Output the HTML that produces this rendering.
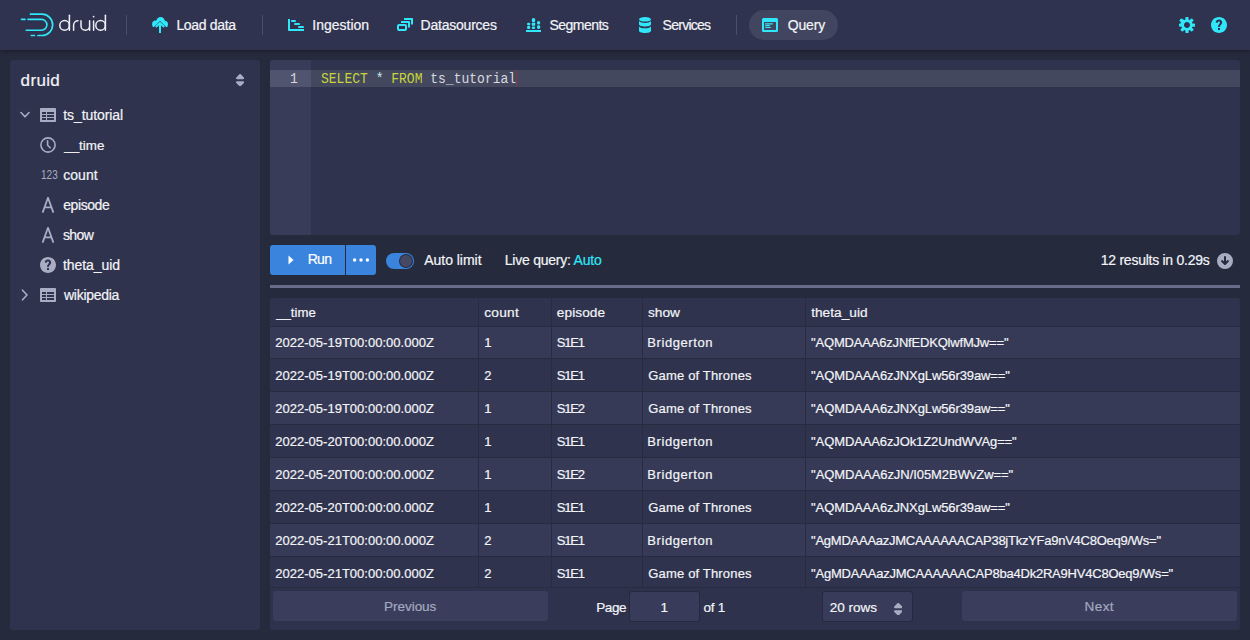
<!DOCTYPE html>
<html><head><meta charset="utf-8">
<style>
*{margin:0;padding:0;box-sizing:border-box}
html,body{width:1250px;height:640px;overflow:hidden;background:#252a3d;font-family:"Liberation Sans",sans-serif;color:#f3f4f7}
.a{position:absolute}
.t{position:absolute;white-space:nowrap;-webkit-text-stroke-width:0.2px}
#hdr{left:0;top:0;width:1250px;height:50px;background:#2f334f;box-shadow:0 1px 4px rgba(0,0,0,.35)}
.sep{position:absolute;top:15px;width:1px;height:20px;background:#4a4e68}
.pill{left:749px;top:10px;width:89px;height:30px;border-radius:15px;background:#41455f}
.panel{background:#2f334e;border-radius:3px}
.cy{fill:#2fe7f8}
.odd{background:#363a56}
.even{background:#2f334e}
.vl{position:absolute;width:1px;background:#282c41}
.btn{position:absolute;background:#3a3e5c;border-radius:3px}

</style></head><body>


<!-- header -->
<div id="hdr" class="a">
  <svg class="a" style="left:0;top:0" width="120" height="50" viewBox="0 0 120 50">
    <g fill="none" stroke="#2fe7f8" stroke-linecap="round">
      <path d="M30.5 14.2 H42 A10.6 10.6 0 0 1 42 35.5 H38" stroke-width="1.7"/>
      <path d="M28 19.4 H41.5 A5.4 5.4 0 0 1 41.5 30.2 H26.2" stroke-width="1.6"/>
      <path d="M21.5 19.4 H25" stroke-width="1.6"/>
      <path d="M31.3 35.5 H34.5" stroke-width="1.6"/>
    </g>
    <g fill="none" stroke="#eef0f5" stroke-width="1.5" stroke-linecap="round">
      <circle cx="64.6" cy="25.4" r="4.8"/>
      <path d="M69.4 15.3 V30.2"/>
      <path d="M73.6 30.2 V25 A4.4 4.4 0 0 1 78 20.7"/>
      <path d="M81 20.7 V26 A4.3 4.3 0 0 0 89.6 26 V20.7 M89.6 25 V30.2"/>
      <path d="M93.6 21 V30.2"/>
      <circle cx="100.6" cy="25.4" r="4.8"/>
      <path d="M105.4 15.3 V30.2"/>
    </g>
    <circle cx="93.6" cy="16.6" r="0.9" fill="#eef0f5"/>
  </svg>
  <div class="sep" style="left:126px"></div>

  <!-- load data icon -->
  <svg class="a" style="left:152px;top:17px" width="16" height="16" viewBox="0 0 16 16">
    <g class="cy"><circle cx="8.6" cy="4.5" r="4.4"/><circle cx="3.7" cy="7.2" r="3.6"/><circle cx="12.5" cy="7.3" r="3.5"/><rect x="3.7" y="5" width="8.8" height="5.8"/></g>
    <path d="M-1 13 L8 4 L17 13 V17 H-1z" fill="#2f334f"/>
    <path d="M3.9 10 L8 5.9 L12.1 10 M8 6.5 V16" fill="none" stroke="#2fe7f8" stroke-width="2" stroke-linejoin="round"/>
  </svg>
  <div class="sep" style="left:262px"></div>

  <!-- ingestion icon -->
  <svg class="a" style="left:288px;top:17px" width="16" height="16" viewBox="0 0 16 16">
    <path class="cy" d="M0 2h2v10h14v2H0.8A0.8 0.8 0 0 1 0 13.2z"/>
    <rect class="cy" x="3" y="3" width="5" height="2" rx="1"/>
    <rect class="cy" x="6" y="6" width="6" height="2" rx="1"/>
    <rect class="cy" x="10" y="9" width="6" height="2" rx="1"/>
  </svg>

  <!-- datasources icon -->
  <svg class="a" style="left:397px;top:17px" width="16" height="16" viewBox="0 0 16 16">
    <g fill="none" stroke="#2fe7f8" stroke-width="2" stroke-linejoin="round">
      <rect x="1" y="8" width="8" height="5" rx="1"/>
      <path d="M4 5 H12 V10.5"/>
      <path d="M7 2 H15 V7.5"/>
    </g>
  </svg>

  <!-- segments icon -->
  <svg class="a" style="left:526px;top:17px" width="16" height="16" viewBox="0 0 16 16">
    <rect class="cy" x="0" y="13" width="15" height="2"/>
    <rect class="cy" x="1" y="5.8" width="3.3" height="2.6" rx="1.3"/>
    <rect class="cy" x="1" y="9" width="3.3" height="3" rx="1.2"/>
    <rect class="cy" x="5.8" y="1" width="3.4" height="4.2" rx="1.5"/>
    <rect class="cy" x="5.8" y="5.8" width="3.4" height="3" rx="0.5"/>
    <rect class="cy" x="5.8" y="9.4" width="3.4" height="2.6" rx="1.2"/>
    <rect class="cy" x="11" y="4" width="3.2" height="3.5" rx="1.5"/>
    <rect class="cy" x="11" y="8.2" width="3.2" height="3.8" rx="1.4"/>
  </svg>

  <!-- services icon -->
  <svg class="a" style="left:639px;top:17px" width="12" height="16" viewBox="0 0 12 16">
    <ellipse class="cy" cx="6" cy="2.3" rx="6" ry="2.3"/>
    <path class="cy" d="M0 4v3.2C0 8.5 2.7 9.5 6 9.5s6-1 6-2.3V4C11 5.2 8.7 5.9 6 5.9S1 5.2 0 4z"/>
    <path class="cy" d="M0 9.4v4.3C0 15 2.7 16 6 16s6-1 6-2.3V9.4C11 10.6 8.7 11.3 6 11.3S1 10.6 0 9.4z"/>
  </svg>
  <div class="sep" style="left:736px"></div>

  <div class="a pill"></div>
  <!-- query icon -->
  <svg class="a" style="left:762px;top:18px" width="16" height="14" viewBox="0 0 16 14">
    <path class="cy" d="M1.5 0h13A1.5 1.5 0 0 1 16 1.5v11a1.5 1.5 0 0 1-1.5 1.5h-13A1.5 1.5 0 0 1 0 12.5v-11A1.5 1.5 0 0 1 1.5 0zM2 4v8h12V4z"/>
    <rect class="cy" x="3" y="5.2" width="8" height="1.2" rx="0.6"/>
    <rect class="cy" x="3" y="7" width="5" height="1.2" rx="0.6"/>
    <rect class="cy" x="3" y="8.9" width="6" height="1.2" rx="0.6"/>
  </svg>

  <!-- gear -->
  <svg class="a" style="left:1179px;top:17px" width="16" height="16" viewBox="0 0 16 16">
    <path class="cy" fill-rule="evenodd" d="M15.19 6.39h-1.85c-.11-.37-.27-.71-.45-1.04l1.36-1.36c.31-.31.31-.82 0-1.13l-1.13-1.13a.803.803 0 00-1.13 0l-1.36 1.36c-.33-.17-.67-.33-1.04-.44V.81c-.01-.45-.37-.81-.82-.81h-1.6c-.45 0-.81.36-.81.81v1.84c-.38.11-.73.26-1.06.45L2.93 1.76a.803.803 0 00-1.13 0L.67 2.89c-.31.31-.31.82 0 1.13l1.36 1.36c-.18.33-.34.68-.45 1.05H.77c-.42 0-.77.36-.77.81v1.6c0 .45.36.81.81.81h1.84c.11.37.27.72.45 1.05L1.74 12.1c-.31.31-.31.82 0 1.130l1.13 1.13c.31.31.82.31 1.13 0l1.36-1.36c.33.18.68.34 1.05.45v1.84c0 .45.36.81.81.81h1.6c.45 0 .81-.36.81-.81v-1.84c.37-.11.72-.26 1.05-.45l1.36 1.36c.31.31.82.31 1.13 0l1.13-1.13a.803.803 0 000-1.130l-1.36-1.36c.18-.33.34-.68.45-1.05h1.84c.45 0 .81-.36.81-.81v-1.6c0-.45-.36-.81-.81-.81zM8 11c-1.66 0-3-1.34-3-3s1.34-3 3-3 3 1.34 3 3-1.34 3-3 3z"/>
  </svg>
  <!-- help -->
  <svg class="a" style="left:1211px;top:17px" width="16" height="16" viewBox="0 0 16 16">
    <path class="cy" d="M8 0C3.58 0 0 3.58 0 8s3.58 8 8 8 8-3.58 8-8-3.58-8-8-8zm1 13H7v-2h2v2zm1.930-6.52c-.14.32-.35.64-.62.97L9.25 8.83c-.12.15-.24.29-.28.42-.04.13-.09.3-.09.52V10H7.12V8.880s.05-.51.21-.71L8.4 6.73c.22-.26.35-.49.44-.68.09-.19.12-.38.12-.58 0-.3-.1-.55-.28-.75-.18-.19-.44-.28-.76-.28-.33 0-.59.1-.78.29-.19.19-.33.46-.4.81-.03.11-.1.15-.2.14l-1.7-.25c-.12-.01-.16-.08-.14-.19.12-.82.46-1.47 1.030-1.94.57-.48 1.32-.72 2.25-.72.47 0 .9.07 1.29.22s.72.34 1 .59c.28.25.49.55.65.89.15.35.22.72.22 1.12s-.06.74-.21 1.060z"/>
  </svg>
</div>

<!-- sidebar -->
<div class="a panel" style="left:10px;top:60px;width:250px;height:570px"></div>
<svg class="a" style="left:235.9px;top:73.6px" width="8.2" height="12.4" viewBox="4 2 8 12" preserveAspectRatio="none"><path fill="#a8adc3" d="M5 7h6a1.003 1.003 0 00.71-1.71l-3-3C8.530 2.11 8.28 2 8 2s-.53.11-.71.29l-3 3A1.003 1.003 0 005 7zm6 2H5a1.003 1.003 0 00-.71 1.71l3 3c.18.18.43.29.71.29s.53-.11.71-.29l3-3A1.003 1.003 0 0011 9z"/></svg>

<!-- tree -->
<svg class="a" style="left:20px;top:111px" width="10" height="8" viewBox="0 0 10 8"><path d="M1 1.5 L5 5.8 L9 1.5" fill="none" stroke="#a8adc3" stroke-width="1.6" stroke-linecap="round" stroke-linejoin="round"/></svg>
<svg class="a" style="left:40px;top:107px" width="16" height="16" viewBox="0 0 16 16"><path fill="#a8adc3" d="M15 1H1c-.6 0-1 .5-1 1v12c0 .6.4 1 1 1h14c.6 0 1-.4 1-1V2c0-.5-.4-1-1-1zM6 13H2v-2h4v2zm0-3H2V8h4v2zm0-3H2V5h4v2zm8 6H7v-2h7v2zm0-3H7V8h7v2zm0-3H7V5h7v2z"/></svg>
<svg class="a" style="left:40px;top:137px" width="16" height="16" viewBox="0 0 16 16"><circle cx="8" cy="8" r="7.1" fill="none" stroke="#a8adc3" stroke-width="1.6"/><path d="M7.6 3.8 V8.2 L10.2 10.8" fill="none" stroke="#a8adc3" stroke-width="1.6" stroke-linecap="round" stroke-linejoin="round"/></svg>
<svg class="a" style="left:40px;top:197px" width="16" height="16" viewBox="0 0 16 16"><path d="M2.6 15.6 L8 0.8 L13.4 15.6 M4.5 10.4 H11.5" fill="none" stroke="#a8adc3" stroke-width="1.8" stroke-linejoin="round"/></svg>
<svg class="a" style="left:40px;top:227px" width="16" height="16" viewBox="0 0 16 16"><path d="M2.6 15.6 L8 0.8 L13.4 15.6 M4.5 10.4 H11.5" fill="none" stroke="#a8adc3" stroke-width="1.8" stroke-linejoin="round"/></svg>
<svg class="a" style="left:40px;top:257px" width="16" height="16" viewBox="0 0 16 16"><path fill="#a8adc3" d="M8 0C3.58 0 0 3.58 0 8s3.58 8 8 8 8-3.58 8-8-3.58-8-8-8zm1 13H7v-2h2v2zm1.930-6.52c-.14.32-.35.64-.62.97L9.25 8.83c-.12.15-.24.29-.28.42-.04.13-.09.3-.09.52V10H7.12V8.880s.05-.51.21-.71L8.4 6.73c.22-.26.35-.49.44-.68.09-.19.12-.38.12-.58 0-.3-.1-.55-.28-.75-.18-.19-.44-.28-.76-.28-.33 0-.59.1-.78.29-.19.19-.33.46-.4.81-.03.11-.1.15-.2.14l-1.7-.25c-.12-.01-.16-.08-.14-.19.12-.82.46-1.47 1.030-1.94.57-.48 1.32-.72 2.25-.72.47 0 .9.07 1.29.22s.72.34 1 .59c.28.25.49.55.65.89.15.35.22.72.22 1.12s-.06.74-.21 1.060z"/></svg>
<svg class="a" style="left:21px;top:289px" width="8" height="12" viewBox="0 0 8 12"><path d="M1.5 1.2 L6 6 L1.5 10.8" fill="none" stroke="#a8adc3" stroke-width="1.6" stroke-linecap="round" stroke-linejoin="round"/></svg>
<svg class="a" style="left:40px;top:287px" width="16" height="16" viewBox="0 0 16 16"><path fill="#a8adc3" d="M15 1H1c-.6 0-1 .5-1 1v12c0 .6.4 1 1 1h14c.6 0 1-.4 1-1V2c0-.5-.4-1-1-1zM6 13H2v-2h4v2zm0-3H2V8h4v2zm0-3H2V5h4v2zm8 6H7v-2h7v2zm0-3H7V8h7v2zm0-3H7V5h7v2z"/></svg>

<!-- editor -->
<div class="a panel" style="left:270px;top:60px;width:970px;height:175px;overflow:hidden">
  <div class="a" style="left:0;top:0;width:41px;height:175px;background:#383c58"></div>
  <div class="a" style="left:0;top:10px;width:41px;height:17px;background:#50546f"></div>
  <div class="a" style="left:41px;top:10px;width:929px;height:17px;background:#44485f"></div>
</div>
<div class="t" style="left:290px;top:71px;font-family:'Liberation Mono',monospace;font-size:13px;line-height:17px;-webkit-text-stroke-width:0;transform:scaleY(1.08);transform-origin:0 12px;color:#d6d8dd">1</div>
<div class="t" style="left:321px;top:71px;font-family:'Liberation Mono',monospace;font-size:13px;line-height:17px;-webkit-text-stroke-width:0;transform:scaleY(1.08);transform-origin:0 12px;color:#d8dae0"><span style="color:#c8d43a">SELECT</span> <span style="color:#c9ecef">*</span> <span style="color:#c8d43a">FROM</span> ts_tutorial</div>
<div class="a" style="left:516px;top:70px;width:1px;height:17px;background:#8a3447"></div>

<!-- run bar -->
<div class="a" style="left:270px;top:245px;width:75px;height:30px;background:#3a84de;border-radius:3px 0 0 3px"></div>
<div class="a" style="left:346px;top:245px;width:30px;height:30px;background:#3a84de;border-radius:0 3px 3px 0"></div>
<svg class="a" style="left:288px;top:255px" width="6" height="10" viewBox="0 0 6 10"><path d="M0.5 0.5 L5.5 5 L0.5 9.5z" fill="#fff"/></svg>
<svg class="a" style="left:352px;top:257px" width="18" height="6" viewBox="0 0 18 6"><circle cx="2.6" cy="3" r="1.7" fill="#fff"/><circle cx="9" cy="3" r="1.7" fill="#fff"/><circle cx="15.4" cy="3" r="1.7" fill="#fff"/></svg>
<div class="a" style="left:386px;top:253px;width:28px;height:16px;border-radius:8px;background:#3a84de"></div>
<div class="a" style="left:400px;top:255px;width:12px;height:12px;border-radius:6px;background:#454963;box-shadow:0 0 0 1px #262a3f"></div>
<svg class="a" style="left:1217px;top:253px" width="16" height="16" viewBox="0 0 16 16"><path fill="#a8adc3" d="M8 0a8 8 0 1 0 0 16A8 8 0 0 0 8 0zm3.7 8.7l-3 3c-.2.2-.4.3-.7.3s-.5-.1-.7-.3l-3-3a1 1 0 0 1 1.4-1.4L7 8.6V4a1 1 0 0 1 2 0v4.6l1.3-1.3a1 1 0 0 1 1.4 1.4z"/></svg>
<div class="a" style="left:270px;top:285px;width:970px;height:3px;background:#686c88"></div>

<!-- table -->
<div class="a panel" style="left:270px;top:298px;width:970px;height:332px"></div>
<div class="a" style="left:270px;top:298px;width:970px;height:29px;border-bottom:1px solid #282c41;background:#2f334e;border-radius:3px 3px 0 0"></div>
<div class="a odd" style="left:270px;top:327px;width:970px;height:32px;border-bottom:1px solid #282c41"></div>
<div class="a even" style="left:270px;top:359px;width:970px;height:33px;border-bottom:1px solid #282c41"></div>
<div class="a odd" style="left:270px;top:392px;width:970px;height:33px;border-bottom:1px solid #282c41"></div>
<div class="a even" style="left:270px;top:425px;width:970px;height:33px;border-bottom:1px solid #282c41"></div>
<div class="a odd" style="left:270px;top:458px;width:970px;height:33px;border-bottom:1px solid #282c41"></div>
<div class="a even" style="left:270px;top:491px;width:970px;height:33px;border-bottom:1px solid #282c41"></div>
<div class="a odd" style="left:270px;top:524px;width:970px;height:33px;border-bottom:1px solid #282c41"></div>
<div class="a even" style="left:270px;top:557px;width:970px;height:31px;border-bottom:1px solid #282c41"></div>
<div class="vl" style="left:478px;top:298px;height:289px"></div>
<div class="vl" style="left:551px;top:298px;height:289px"></div>
<div class="vl" style="left:642px;top:298px;height:289px"></div>
<div class="vl" style="left:805px;top:298px;height:289px"></div>

<!-- pagination -->
<div class="a" style="left:270px;top:588px;width:970px;height:42px;background:#2e324c;border-radius:0 0 3px 3px"></div>
<div class="btn" style="left:273px;top:591px;width:275px;height:30px"></div>
<div class="btn" style="left:962px;top:591px;width:275px;height:30px"></div>
<div class="a" style="left:629px;top:591px;width:71px;height:31px;background:#383c5a;border-radius:3px;box-shadow:inset 0 0 0 1px #262a3e"></div>
<div class="a" style="left:822px;top:591px;width:91px;height:31px;background:#383c5a;border-radius:3px;box-shadow:inset 0 0 0 1px #262a3e"></div>
<svg class="a" style="left:894px;top:603px" width="8.4" height="12.4" viewBox="4 2 8 12" preserveAspectRatio="none"><path fill="#a8adc3" d="M5 7h6a1.003 1.003 0 00.71-1.71l-3-3C8.530 2.11 8.28 2 8 2s-.53.11-.71.29l-3 3A1.003 1.003 0 005 7zm6 2H5a1.003 1.003 0 00-.71 1.71l3 3c.18.18.43.29.71.29s.53-.11.71-.29l3-3A1.003 1.003 0 0011 9z"/></svg>

<div class="t" style="left:176.40px;top:17px;font-size:14px;line-height:16px;letter-spacing:-0.337px">Load data</div>
<div class="t" style="left:312.30px;top:17px;font-size:14px;line-height:16px">Ingestion</div>
<div class="t" style="left:420.60px;top:17px;font-size:14px;line-height:16px;letter-spacing:-0.229px">Datasources</div>
<div class="t" style="left:549.50px;top:17px;font-size:14px;line-height:16px;letter-spacing:-0.533px">Segments</div>
<div class="t" style="left:662.60px;top:17px;font-size:14px;line-height:16px;letter-spacing:-0.740px">Services</div>
<div class="t" style="left:787.70px;top:17px;font-size:14px;line-height:16px;letter-spacing:-0.156px">Query</div>
<div class="t" style="left:20.60px;top:71px;font-size:17px;line-height:19px;letter-spacing:0.338px">druid</div>
<div class="t" style="left:63.20px;top:107px;font-size:14px;line-height:16px;letter-spacing:-0.069px">ts_tutorial</div>
<div class="t" style="left:64.20px;top:138px;font-size:13.4px;line-height:15px">__time</div>
<div class="t" style="left:40.70px;top:168.2px;font-size:12px;line-height:14px;color:#a8adc3;-webkit-text-stroke-width:0;transform:scaleX(0.84);transform-origin:0 0">123</div>
<div class="t" style="left:63.20px;top:167px;font-size:14px;line-height:16px;letter-spacing:0.060px">count</div>
<div class="t" style="left:63.20px;top:197px;font-size:14px;line-height:16px;letter-spacing:-0.409px">episode</div>
<div class="t" style="left:62.90px;top:227px;font-size:14px;line-height:16px;letter-spacing:-0.557px">show</div>
<div class="t" style="left:63.00px;top:257px;font-size:14px;line-height:16px;letter-spacing:-0.078px">theta_uid</div>
<div class="t" style="left:64.00px;top:287px;font-size:14px;line-height:16px;letter-spacing:-0.275px">wikipedia</div>
<div class="t" style="left:307.70px;top:251px;font-size:14px;line-height:16px;letter-spacing:-0.698px;color:#ffffff">Run</div>
<div class="t" style="left:424.20px;top:252px;font-size:14px;line-height:16px;letter-spacing:-0.020px">Auto limit</div>
<div class="t" style="left:504.70px;top:252px;font-size:14px;line-height:16px;letter-spacing:-0.226px">Live query: <span style="color:#2fe7f8">Auto</span></div>
<div class="t" style="left:1100.80px;top:252px;font-size:14px;line-height:16px;letter-spacing:-0.262px">12 results in 0.29s</div>
<div class="t" style="left:276.20px;top:305px;font-size:13.2px;line-height:15px">__time</div>
<div class="t" style="left:484.30px;top:305px;font-size:13.7px;line-height:15px;letter-spacing:0.230px">count</div>
<div class="t" style="left:556.80px;top:305px;font-size:13.7px;line-height:15px;letter-spacing:0.061px">episode</div>
<div class="t" style="left:648.00px;top:305px;font-size:13.7px;line-height:15px;letter-spacing:-0.023px">show</div>
<div class="t" style="left:811.20px;top:305px;font-size:13.7px;line-height:15px;letter-spacing:0.011px">theta_uid</div>
<div class="t" style="left:275.20px;top:335px;font-size:13px;line-height:15px;letter-spacing:0.020px">2022-05-19T00:00:00.000Z</div>
<div class="t" style="left:484.20px;top:335px;font-size:13px;line-height:15px">1</div>
<div class="t" style="left:556.80px;top:335px;font-size:13px;line-height:15px;letter-spacing:-1.191px">S1E1</div>
<div class="t" style="left:647.30px;top:335px;font-size:13px;line-height:15px;letter-spacing:0.583px">Bridgerton</div>
<div class="t" style="left:811.10px;top:335px;font-size:13px;line-height:15px;letter-spacing:-0.188px">"AQMDAAA6zJNfEDKQlwfMJw=="</div>
<div class="t" style="left:275.20px;top:368px;font-size:13px;line-height:15px;letter-spacing:0.020px">2022-05-19T00:00:00.000Z</div>
<div class="t" style="left:484.20px;top:368px;font-size:13px;line-height:15px">2</div>
<div class="t" style="left:556.80px;top:368px;font-size:13px;line-height:15px;letter-spacing:-1.191px">S1E1</div>
<div class="t" style="left:648.30px;top:368px;font-size:13px;line-height:15px;letter-spacing:0.167px">Game of Thrones</div>
<div class="t" style="left:811.10px;top:368px;font-size:13px;line-height:15px;letter-spacing:-0.105px">"AQMDAAA6zJNXgLw56r39aw=="</div>
<div class="t" style="left:275.20px;top:401px;font-size:13px;line-height:15px;letter-spacing:0.020px">2022-05-19T00:00:00.000Z</div>
<div class="t" style="left:484.20px;top:401px;font-size:13px;line-height:15px">1</div>
<div class="t" style="left:556.80px;top:401px;font-size:13px;line-height:15px;letter-spacing:-1.191px">S1E2</div>
<div class="t" style="left:648.30px;top:401px;font-size:13px;line-height:15px;letter-spacing:0.167px">Game of Thrones</div>
<div class="t" style="left:811.10px;top:401px;font-size:13px;line-height:15px;letter-spacing:-0.105px">"AQMDAAA6zJNXgLw56r39aw=="</div>
<div class="t" style="left:275.20px;top:434px;font-size:13px;line-height:15px;letter-spacing:0.020px">2022-05-20T00:00:00.000Z</div>
<div class="t" style="left:484.20px;top:434px;font-size:13px;line-height:15px">1</div>
<div class="t" style="left:556.80px;top:434px;font-size:13px;line-height:15px;letter-spacing:-1.191px">S1E1</div>
<div class="t" style="left:647.30px;top:434px;font-size:13px;line-height:15px;letter-spacing:0.583px">Bridgerton</div>
<div class="t" style="left:811.10px;top:434px;font-size:13px;line-height:15px;letter-spacing:-0.111px">"AQMDAAA6zJOk1Z2UndWVAg=="</div>
<div class="t" style="left:275.20px;top:467px;font-size:13px;line-height:15px;letter-spacing:0.020px">2022-05-20T00:00:00.000Z</div>
<div class="t" style="left:484.20px;top:467px;font-size:13px;line-height:15px">1</div>
<div class="t" style="left:556.80px;top:467px;font-size:13px;line-height:15px;letter-spacing:-1.191px">S1E2</div>
<div class="t" style="left:647.30px;top:467px;font-size:13px;line-height:15px;letter-spacing:0.583px">Bridgerton</div>
<div class="t" style="left:811.10px;top:467px;font-size:13px;line-height:15px;letter-spacing:-0.058px">"AQMDAAA6zJN/I05M2BWvZw=="</div>
<div class="t" style="left:275.20px;top:500px;font-size:13px;line-height:15px;letter-spacing:0.020px">2022-05-20T00:00:00.000Z</div>
<div class="t" style="left:484.20px;top:500px;font-size:13px;line-height:15px">1</div>
<div class="t" style="left:556.80px;top:500px;font-size:13px;line-height:15px;letter-spacing:-1.191px">S1E1</div>
<div class="t" style="left:648.30px;top:500px;font-size:13px;line-height:15px;letter-spacing:0.167px">Game of Thrones</div>
<div class="t" style="left:811.10px;top:500px;font-size:13px;line-height:15px;letter-spacing:-0.105px">"AQMDAAA6zJNXgLw56r39aw=="</div>
<div class="t" style="left:275.20px;top:533px;font-size:13px;line-height:15px;letter-spacing:0.020px">2022-05-21T00:00:00.000Z</div>
<div class="t" style="left:484.20px;top:533px;font-size:13px;line-height:15px">2</div>
<div class="t" style="left:556.80px;top:533px;font-size:13px;line-height:15px;letter-spacing:-1.191px">S1E1</div>
<div class="t" style="left:647.30px;top:533px;font-size:13px;line-height:15px;letter-spacing:0.583px">Bridgerton</div>
<div class="t" style="left:811.10px;top:533px;font-size:13px;line-height:15px;letter-spacing:-0.256px">"AgMDAAAazJMCAAAAAACAP38jTkzYFa9nV4C8Oeq9/Ws="</div>
<div class="t" style="left:275.20px;top:566px;font-size:13px;line-height:15px;letter-spacing:0.020px">2022-05-21T00:00:00.000Z</div>
<div class="t" style="left:484.20px;top:566px;font-size:13px;line-height:15px">2</div>
<div class="t" style="left:556.80px;top:566px;font-size:13px;line-height:15px;letter-spacing:-1.191px">S1E1</div>
<div class="t" style="left:648.30px;top:566px;font-size:13px;line-height:15px;letter-spacing:0.167px">Game of Thrones</div>
<div class="t" style="left:811.10px;top:566px;font-size:13px;line-height:15px;letter-spacing:-0.212px">"AgMDAAAazJMCAAAAAACAP8ba4Dk2RA9HV4C8Oeq9/Ws="</div>
<div class="t" style="left:384.00px;top:599px;font-size:13.5px;line-height:15px;letter-spacing:-0.025px;color:#a4a9c0">Previous</div>
<div class="t" style="left:1084.60px;top:599px;font-size:13.5px;line-height:15px;letter-spacing:0.398px;color:#a4a9c0">Next</div>
<div class="t" style="left:596.30px;top:600px;font-size:13.5px;line-height:15px;letter-spacing:-0.440px">Page</div>
<div class="t" style="left:660.60px;top:600px;font-size:13.5px;line-height:15px">1</div>
<div class="t" style="left:703.50px;top:600px;font-size:13.5px;line-height:15px;letter-spacing:-0.237px">of 1</div>
<div class="t" style="left:829.80px;top:600px;font-size:13.5px;line-height:15px;letter-spacing:-0.020px">20 rows</div>
</body></html>
